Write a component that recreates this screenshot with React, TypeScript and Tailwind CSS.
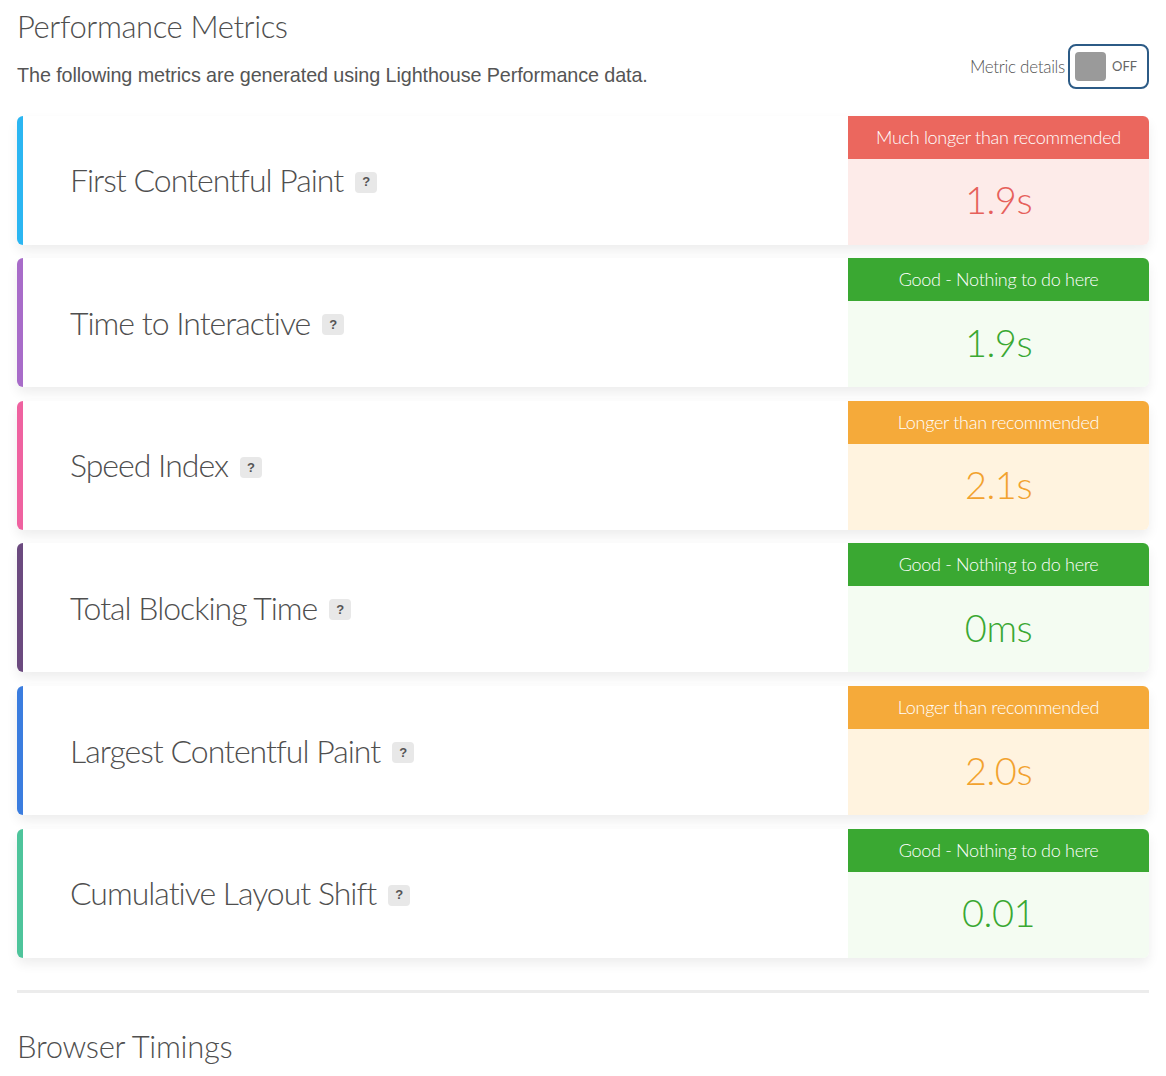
import React from 'react';

type Tone = 'bad' | 'good' | 'warn';

interface Metric {
  name: string;
  value: string;
  tone: Tone;
  accent: string;
}

const metrics: Metric[] = [
  { name: 'First Contentful Paint', value: '1.9s', tone: 'bad', accent: 'bg-[#2bb6f2]' },
  { name: 'Time to Interactive', value: '1.9s', tone: 'good', accent: 'bg-[#a86cc9]' },
  { name: 'Speed Index', value: '2.1s', tone: 'warn', accent: 'bg-[#ef62a0]' },
  { name: 'Total Blocking Time', value: '0ms', tone: 'good', accent: 'bg-[#6b4a7f]' },
  { name: 'Largest Contentful Paint', value: '2.0s', tone: 'warn', accent: 'bg-[#3b7ddf]' },
  { name: 'Cumulative Layout Shift', value: '0.01', tone: 'good', accent: 'bg-[#4ec49b]' },
];

const toneStyles: Record<Tone, { label: string; head: string; body: string; text: string }> = {
  bad: {
    label: 'Much longer than recommended',
    head: 'bg-[#eb675e]',
    body: 'bg-[#fdebe9]',
    text: 'text-[#e6605a]',
  },
  good: {
    label: 'Good - Nothing to do here',
    head: 'bg-[#3aa832]',
    body: 'bg-[#f4fcf2]',
    text: 'text-[#3aa832]',
  },
  warn: {
    label: 'Longer than recommended',
    head: 'bg-[#f5aa3a]',
    body: 'bg-[#fff3df]',
    text: 'text-[#f2a22e]',
  },
};

const heading = "font-['Lato','Noto_Sans',sans-serif] font-light";

const HelpBadge: React.FC = () => (
  <span className="ml-3 mt-[4px] inline-flex h-[21px] w-[22px] items-center justify-center rounded-[4px] bg-[#e8e8e8] font-['Liberation_Sans',sans-serif] text-[13px] font-bold text-[#555]">
    ?
  </span>
);

const MetricCard: React.FC<{ metric: Metric }> = ({ metric }) => {
  const tone = toneStyles[metric.tone];
  return (
    <div className="flex h-[129px] overflow-hidden rounded-[6px] bg-white shadow-[0_6px_12px_rgba(0,0,0,0.07)]">
      <div className={`w-[6px] shrink-0 ${metric.accent}`} />
      <div className="flex flex-1 items-center pl-[47px]">
        <span className={`${heading} text-[32px] tracking-[-1px] text-[#4f4f4f]`}>{metric.name}</span>
        <HelpBadge />
      </div>
      <div className="flex w-[301px] shrink-0 flex-col">
        <div
          className={`flex h-[43px] items-center justify-center ${tone.head} ${heading} text-[18px] tracking-[-0.3px] text-white`}
        >
          {tone.label}
        </div>
        <div className={`flex flex-1 items-center justify-center pb-[4px] ${tone.body}`}>
          <span className={`${heading} text-[38px] tracking-[-0.5px] ${tone.text}`}>{metric.value}</span>
        </div>
      </div>
    </div>
  );
};

const App: React.FC = () => {
  return (
    <div className="min-h-screen bg-white px-[17px] pb-8 text-[#555]">
      <div className="flex items-start justify-between">
        <div>
          <h2 className={`${heading} pt-[6px] text-[31px] leading-[40px] tracking-[-0.4px] text-[#4f4f4f]`}>
            Performance Metrics
          </h2>
          <p className="mt-[15px] font-['Liberation_Sans',sans-serif] text-[19.8px] tracking-[-0.1px] text-[#555]">
            The following metrics are generated using Lighthouse Performance data.
          </p>
        </div>
        <div className="mt-[44px] flex items-center">
          <span className={`${heading} text-[17px] tracking-[-0.3px] text-[#555]`}>Metric details</span>
          <div className="ml-[3px] flex h-[45px] w-[81px] items-center rounded-[8px] border-2 border-[#2c5b86] pl-[5px]">
            <div className="h-[29px] w-[31px] rounded-[4px] bg-[#9a9a9a]" />
            <span className="ml-[6px] font-['Lato',sans-serif] text-[13px] text-[#666]">OFF</span>
          </div>
        </div>
      </div>

      <div className="mt-[25px] flex flex-col gap-[13.6px]">
        {metrics.map(m => (
          <MetricCard key={m.name} metric={m} />
        ))}
      </div>

      <div className="mt-[32px] h-[3px] bg-[#ececec]" />

      <h2 className={`${heading} mt-[30px] text-[31px] tracking-[-0.3px] text-[#4f4f4f]`}>Browser Timings</h2>
    </div>
  );
};

export default App;
